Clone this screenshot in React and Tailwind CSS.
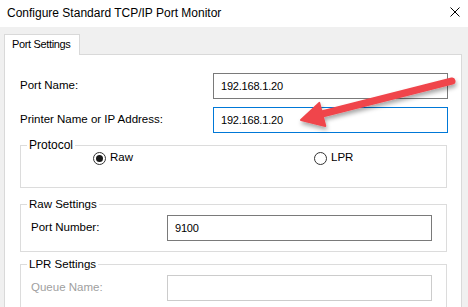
import React from "react";

function Radio({ checked }) {
  return (
    <span className="w-[13px] h-[13px] rounded-full border border-[#333333] bg-white flex items-center justify-center shrink-0">
      {checked && <span className="w-[7px] h-[7px] rounded-full bg-[#1a1a1a]" />}
    </span>
  );
}

export default function App() {
  return (
    <div className="w-[468px] h-[307px] overflow-hidden bg-[#f0f0f0] relative flex flex-col font-['Liberation_Sans',Arial,sans-serif] text-[11.5px] text-black whitespace-nowrap">
      <div className="h-[27px] shrink-0 bg-white flex items-center justify-between pl-[7px] pr-[8px]">
        <span className="text-[12px] leading-[16px] -mt-[1px]">Configure Standard TCP/IP Port Monitor</span>
        <svg width="10" height="10" viewBox="0 0 10 10" className="-mt-[4px]">
          <path d="M0.5 0.5 L9.5 9.5 M9.5 0.5 L0.5 9.5" stroke="#000" strokeWidth="1" />
        </svg>
      </div>
      <div className="flex-1 pt-[7px] pl-[4px] pr-[6px] flex flex-col">
        <div className="relative z-10 w-[76px] h-[21px] border border-b-0 border-[#d9d9d9] bg-white pl-[7px] leading-[19px] text-[11px] tracking-[-0.35px]">
          Port Settings
        </div>
        <div className="-mt-px border border-[#d9d9d9] bg-white flex-1 pl-[15px] pr-[13px] pt-[18px] flex flex-col">
          <div className="flex items-center h-[26px]">
            <span className="flex-1">Port Name:</span>
            <div className="w-[235px] h-[26px] border border-[#7a7a7a] flex items-center pl-[7px] text-[11px] tracking-[-0.2px]">192.168.1.20</div>
          </div>
          <div className="flex items-center h-[26px] mt-[8px]">
            <span className="flex-1">Printer Name or IP Address:</span>
            <div className="w-[235px] h-[26px] border border-[#0078d7] flex items-center pl-[7px] text-[11px] tracking-[-0.2px]">192.168.1.20</div>
          </div>

          <fieldset className="mt-[4px] mr-[1px] border border-[#dcdcdc] h-[51px]">
            <legend className="ml-[6px] px-[2px] leading-[16px] text-[12px]">Protocol</legend>
            <div className="-mt-[2px] h-[14px] pl-[72px] flex items-center">
              <div className="w-[221px] flex items-center gap-[4px]">
                <Radio checked />
                <span>Raw</span>
              </div>
              <div className="flex items-center gap-[4px]">
                <Radio />
                <span>LPR</span>
              </div>
            </div>
          </fieldset>

          <fieldset className="mt-[8px] mr-[1px] border border-[#dcdcdc] h-[56px]">
            <legend className="ml-[6px] px-[2px] leading-[16px] text-[11.5px]">Raw Settings</legend>
            <div className="mt-[3px] pl-[10px] pr-[14px] flex items-center">
              <span className="w-[136px]">Port Number:</span>
              <div className="flex-1 h-[26px] border border-[#7a7a7a] flex items-center pl-[7px] text-[11px] tracking-[-0.2px]">9100</div>
            </div>
          </fieldset>

          <fieldset className="mt-[4px] mr-[1px] border border-[#dcdcdc] h-[80px]">
            <legend className="ml-[6px] px-[2px] leading-[16px] text-[11.5px]">LPR Settings</legend>
            <div className="mt-[3px] pl-[10px] pr-[14px] flex items-center">
              <span className="w-[136px] text-[#a0a0a0]">Queue Name:</span>
              <div className="flex-1 h-[26px] border border-[#cccccc]" />
            </div>
          </fieldset>
        </div>
      </div>

      <svg className="absolute left-0 top-0 pointer-events-none" width="468" height="307" viewBox="0 0 468 307">
        <defs>
          <filter id="sh" x="-20%" y="-50%" width="140%" height="200%">
            <feDropShadow dx="1" dy="3" stdDeviation="2" floodColor="#000" floodOpacity="0.35" />
          </filter>
        </defs>
        <g filter="url(#sh)">
          <line x1="318" y1="115" x2="452" y2="81" stroke="#f0454b" strokeWidth="7" strokeLinecap="round" />
          <polygon points="301,120 319.3,102.9 325.3,126.1" fill="#f0454b" stroke="#f0454b" strokeWidth="2" strokeLinejoin="round" />
        </g>
      </svg>
    </div>
  );
}
